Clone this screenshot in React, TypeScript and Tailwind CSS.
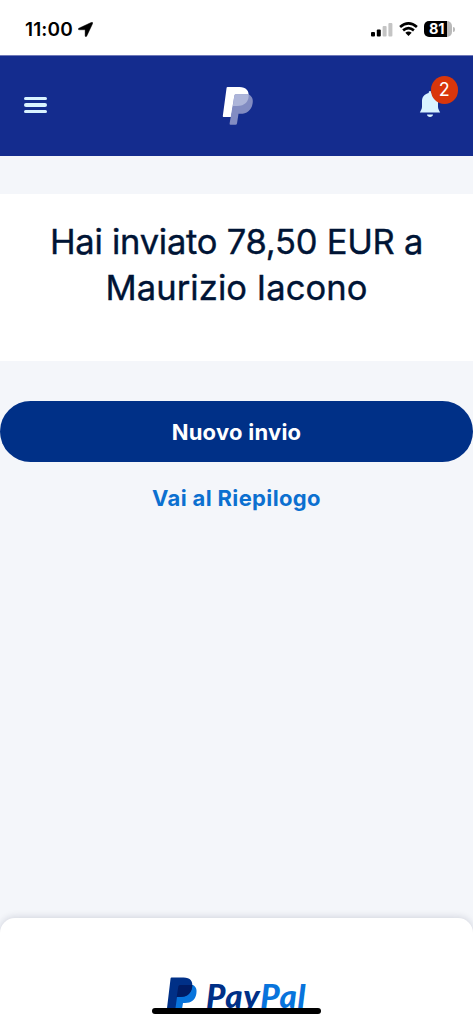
import React from "react";

function StatusBar() {
  return (
    <div className="flex h-[55px] shrink-0 items-center bg-white pr-[18px] pl-[25px] text-black">
      <span className="mt-[4px] text-[19px] leading-6 font-semibold tracking-[0.150px]">11:00</span>
      <svg className="mt-[4px] ml-[5px]" width="15" height="15" viewBox="0 0 15 15">
        <path d="M13.600.3.8 6.200c-1 .5-.8 1.600.4 1.600h5.600c.2 0 .3.1.3.3v5.600c0 1.200 1.200 1.400 1.700.3L14.700 1.400c.3-.8-.2-1.500-1.100-1.100Z" fill="#000" stroke="#000" strokeWidth=".4" />
      </svg>
      <svg className="mt-[3px] ml-auto" width="22" height="15" viewBox="0 0 22 15">
        <rect x="0" y="10" width="4" height="4.500" rx="1" fill="#000" />
        <rect x="5.800" y="7.500" width="4" height="7" rx="1" fill="#000" />
        <rect x="11.600" y="4" width="4" height="10.500" rx="1" fill="#c4c4c4" />
        <rect x="17.400" y="1" width="4" height="13.500" rx="1" fill="#c4c4c4" />
      </svg>
      <svg className="mt-[3px] ml-[6px]" width="19" height="14" viewBox="0 0 19 14">
        <path d="M1.100 5Q9.500-2.200 17.900 5M4.100 8.400q5.400-4.400 10.800 0" fill="none" stroke="#000" strokeWidth="2.700" />
        <path d="M6.300 10.800q3.200-2.600 6.400 0l-3.200 3.100Z" fill="#000" />
      </svg>
      <div className="mt-[3px] ml-[6px] flex h-4 w-7 items-center rounded-[5px] bg-[linear-gradient(to_right,#000_81%,#b9b9b9_81%)] pl-[5px] text-[14.500px] leading-4 font-bold tracking-[-0.3px] text-white">
        81
      </div>
      <div className="mt-[3px] ml-px h-[5px] w-[2px] rounded-r-full bg-[#b9b9b9]" />
    </div>
  );
}

function Header() {
  return (
    <header className="grid h-[101px] shrink-0 grid-cols-3 items-center border-t border-[#6f79b8] bg-[#142c8e] pr-[15px] pb-[2px] pl-6">
      <div className="flex w-[23px] flex-col gap-[3px]">
        <span className="h-[3.500px] rounded-full bg-[#d9f3ff]" />
        <span className="h-[3.500px] rounded-full bg-[#d9f3ff]" />
        <span className="h-[3.500px] rounded-full bg-[#d9f3ff]" />
      </div>
      <svg className="mt-[2px] ml-[53px]" width="32" height="40" viewBox="0 0 32 40">
        <path d="M5.500 1H17.500C24 1 27.500 5 26.500 10.500C25.300 17 20.500 20 14 20H11L9.200 31H1.500Q.7 31 .8 30L4.600 1.800Q4.700 1 5.500 1Z" fill="#fff" />
        <path d="M12.400 9.500Q12.700 8.200 14 8.200H26.600C30 10 31.500 13.500 30.600 17.500C29.500 24.500 24.500 27.800 18.500 27.800H16.500L15 37.500Q14.800 38.700 13.500 38.700H8.500Q7.400 38.700 7.600 37.500Z" fill="#828cc2" />
        <path d="M12.400 9.500Q12.700 8.200 14 8.200H26.600C27.300 15 23 20 15 20H10.800Z" fill="#adb5d9" />
      </svg>
      <div className="relative mr-[17px] h-7 w-[22px] justify-self-end">
        <svg width="22" height="28" viewBox="0 0 22 28">
          <path d="M11 0c1 0 1.300.8 1.300 1.900C16.700 3 19 6 19 10v5.800c0 2 1 3.600 2.200 5.700H.8C2 19.400 3 17.800 3 15.800V10c0-4 2.300-7 6.700-8.100C9.700.8 10 0 11 0Z" fill="#d9f3ff" />
          <path d="M8 23.500h6c0 3.300-6 3.300-6 0Z" fill="#d9f3ff" />
        </svg>
        <span className="absolute -top-[15px] left-[11.500px] flex size-[27.500px] items-center justify-center rounded-full bg-[#d9360b] text-[18px] leading-none text-white">2</span>
      </div>
    </header>
  );
}

function Footer() {
  return (
    <footer className="relative mt-auto h-[106px] shrink-0 rounded-t-[15px] bg-white shadow-[0_-1px_7px_rgba(20,30,60,0.15)]">
      <div className="flex pt-[59px] pl-[166px]">
        <svg width="32" height="38" viewBox="0 0 32 38">
          <path d="M11 8H27C30.500 10 31 13 30.300 17C29.300 23 25 26 19 26H17L15.500 35Q15.200 37 13.500 37H8.500Q7 37 7.200 35.500Z" fill="#0874dc" />
          <path d="M5.500.5H17.500C24.500.5 27.300 4.500 26.100 10.500C25 17 20.500 20 14 20H11L9.100 34H1.500Q.7 34 .8 33L4.600 1.300Q4.700.5 5.500.5Z" fill="#003087" />
          <path d="M12.300 9.500Q12.500 8 14 8H26.300C26.200 15.500 22 20 14 20H10.700Z" fill="#001c64" />
        </svg>
        <span className="ml-[8px] font-[Lato] text-[33px] leading-9 font-black tracking-[0.8px] italic">
          <span className="text-[#003087]">Pay</span>
          <span className="text-[#0874dc]">Pal</span>
        </span>
      </div>
      <div className="absolute bottom-[10px] left-[152px] h-[6px] w-[169px] rounded-full bg-black" />
    </footer>
  );
}

export default function App() {
  return (
    <div className="flex h-[1024px] w-full flex-col overflow-hidden bg-[#f4f6fa] font-[Inter,sans-serif]">
      <StatusBar />
      <Header />
      <main className="flex flex-col pt-[38px]">
        <h1 className="h-[167px] bg-white pt-[25px] text-center text-[34.500px] leading-[45.500px] font-normal tracking-[-0.250px] text-[#001435] [-webkit-text-stroke:0.4px_#001435]">
          Hai inviato 78,50 EUR a<br />
          <span className="tracking-[0.080px]">Maurizio Iacono</span>
        </h1>
        <button className="mt-10 h-[61px] w-full rounded-full bg-[#003087] pt-[2px] text-[22px] font-bold tracking-[0.250px] text-white">Nuovo invio</button>
        <a className="mt-[20px] text-center text-[22px] leading-8 font-bold tracking-[0.350px] text-[#0c70d0]">Vai al Riepilogo</a>
      </main>
      <Footer />
    </div>
  );
}
